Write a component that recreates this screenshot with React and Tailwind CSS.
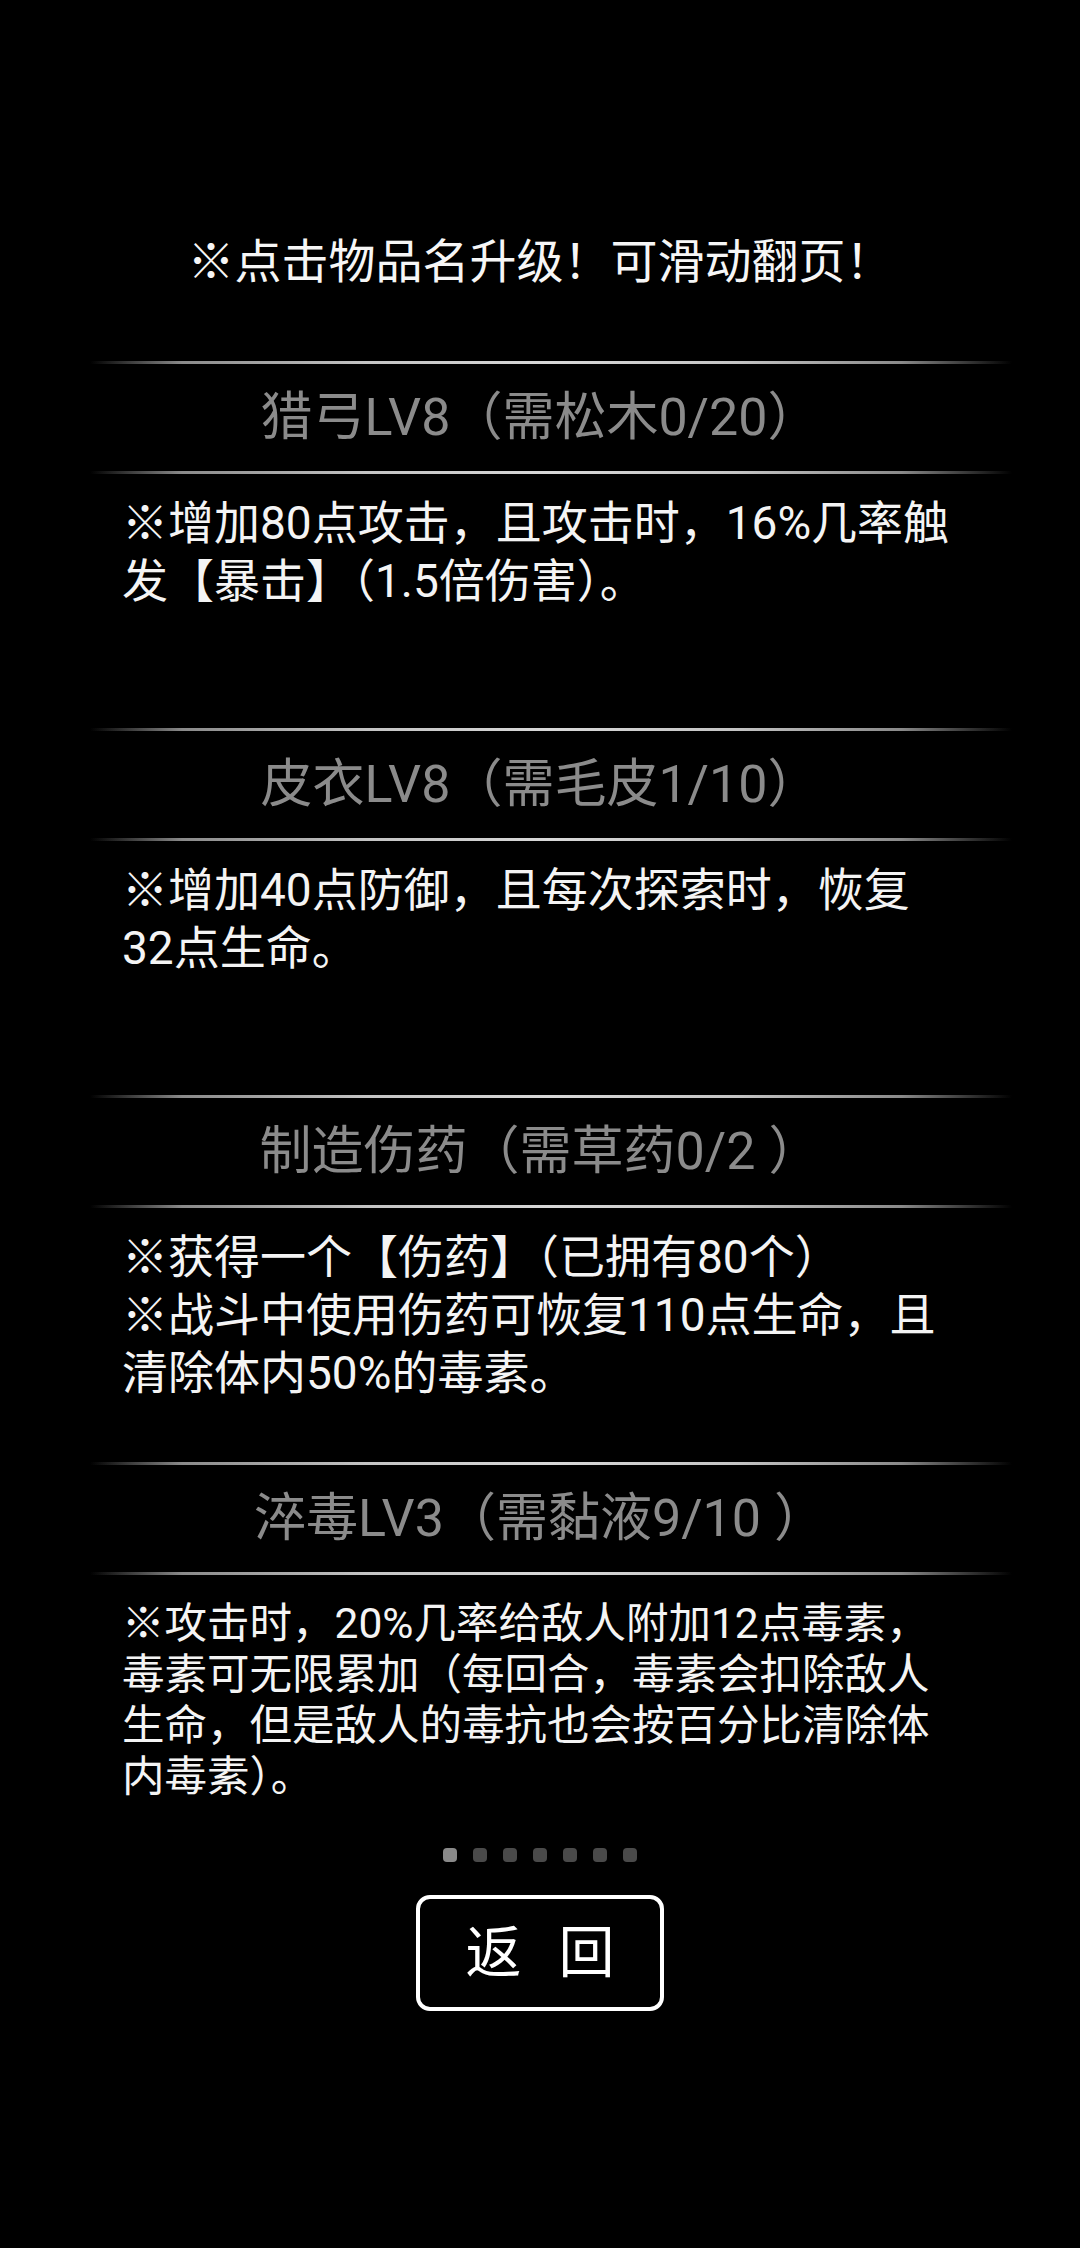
import React from "react";

const FONT = { fontFamily: '"Roboto", "Noto Sans CJK SC", sans-serif' };

function Rule() {
  return (
    <div className="ml-[90px] w-[922px] h-[3px] bg-[linear-gradient(to_right,rgba(120,120,120,0),#8a8a8a_10%,#c4c4c4_30%,#d8d8d8_50%,#c4c4c4_70%,#8a8a8a_88%,rgba(120,120,120,0))]" />
  );
}

function Section({ title, lines, small, fixed }) {
  return (
    <div className={fixed ? "h-[367px] flex flex-col" : "flex flex-col"}>
      <Rule />
      <div className="h-[107px] flex items-center justify-center text-[52px] leading-[60px] text-[#8b8b8b] whitespace-nowrap">
        {title}
      </div>
      <Rule />
      <div
        className={
          small
            ? "mt-[23px] pl-[122px] text-[42.5px] leading-[51px] text-[#f4f4f4] whitespace-nowrap"
            : "mt-[20px] pl-[122px] text-[46px] leading-[58px] text-[#f4f4f4] whitespace-nowrap"
        }
      >
        {lines.map((l, i) => (
          <div key={i}>{l}</div>
        ))}
      </div>
    </div>
  );
}

export default function App() {
  return (
    <div className="w-[1080px] min-h-[2248px] bg-black flex flex-col" style={FONT}>
      <div className="mt-[232px] text-center text-[47px] leading-[60px] text-[#f6f6f6] whitespace-nowrap">
        ※点击物品名升级！可滑动翻页！
      </div>
      <div className="mt-[69px] flex flex-col">
        <Section
          fixed
          title="猎弓LV8（需松木0/20）"
          lines={["※增加80点攻击，且攻击时，16%几率触", "发【暴击】（1.5倍伤害）。"]}
        />
        <Section
          fixed
          title="皮衣LV8（需毛皮1/10）"
          lines={["※增加40点防御，且每次探索时，恢复", "32点生命。"]}
        />
        <Section
          fixed
          title="制造伤药（需草药0/2 ）"
          lines={[
            "※获得一个【伤药】（已拥有80个）",
            "※战斗中使用伤药可恢复110点生命，且",
            "清除体内50%的毒素。",
          ]}
        />
        <Section
          small
          title="淬毒LV3（需黏液9/10 ）"
          lines={[
            "※攻击时，20%几率给敌人附加12点毒素，",
            "毒素可无限累加（每回合，毒素会扣除敌人",
            "生命，但是敌人的毒抗也会按百分比清除体",
            "内毒素）。",
          ]}
        />
      </div>
      <div className="mt-[46px] flex justify-center gap-[16px]">
        <div className="w-[14px] h-[14px] rounded-[4px] bg-[#8a8a8a]" />
        <div className="w-[14px] h-[14px] rounded-[4px] bg-[#4a4a4a]" />
        <div className="w-[14px] h-[14px] rounded-[4px] bg-[#4a4a4a]" />
        <div className="w-[14px] h-[14px] rounded-[4px] bg-[#4a4a4a]" />
        <div className="w-[14px] h-[14px] rounded-[4px] bg-[#4a4a4a]" />
        <div className="w-[14px] h-[14px] rounded-[4px] bg-[#4a4a4a]" />
        <div className="w-[14px] h-[14px] rounded-[4px] bg-[#4a4a4a]" />
      </div>
      <div className="mt-[33px] flex justify-center">
        <div className="w-[248px] h-[116px] border-[4px] border-white rounded-[14px] flex items-center justify-center gap-[37px] text-[56px] leading-none text-white">
          <span>返</span>
          <span>回</span>
        </div>
      </div>
    </div>
  );
}
